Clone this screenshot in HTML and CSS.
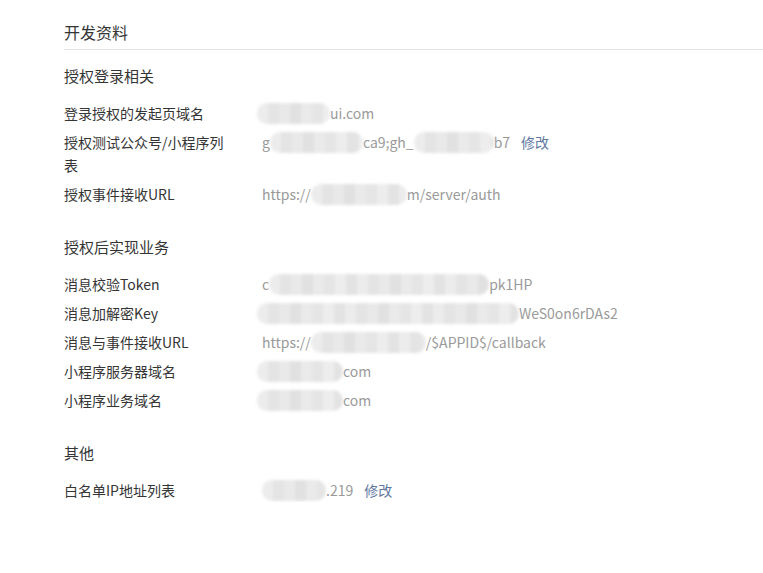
FILE: index.html
```html
<!DOCTYPE html>
<html lang="zh-CN">

<head>
  <meta charset="UTF-8" />
  <meta name="viewport" content="width=device-width, initial-scale=1.0" />
  <title>开发资料</title>
  <link rel="stylesheet" href="styles.css">
</head>

<body>
  <div class="page">
    <h2 class="page-title">开发资料</h2>

    <!-- 授权登录相关 -->
    <div class="section">
      <h3 class="section-title">授权登录相关</h3>
      <ul class="info-list">
        <li class="info-row">
          <span class="info-label">登录授权的发起页域名</span>
          <span class="info-value"><span class="mask mask-73 mask-flush"></span>ui.com</span>
        </li>
        <li class="info-row">
          <span class="info-label">授权测试公众号/小程序列表</span>
          <span class="info-value">g<span class="mask mask-93"></span>ca9;gh_<span class="mask mask-80"></span>b7<a class="edit-link" href="#">修改</a></span>
        </li>
        <li class="info-row">
          <span class="info-label">授权事件接收URL</span>
          <span class="info-value">https://<span class="mask mask-96"></span>m/server/auth</span>
        </li>
      </ul>
    </div>

    <!-- 授权后实现业务 -->
    <div class="section">
      <h3 class="section-title">授权后实现业务</h3>
      <ul class="info-list">
        <li class="info-row">
          <span class="info-label">消息校验Token</span>
          <span class="info-value">c<span class="mask mask-220"></span>pk1HP</span>
        </li>
        <li class="info-row">
          <span class="info-label">消息加解密Key</span>
          <span class="info-value"><span class="mask mask-262 mask-flush"></span>WeS0on6rDAs2</span>
        </li>
        <li class="info-row">
          <span class="info-label">消息与事件接收URL</span>
          <span class="info-value">https://<span class="mask mask-115"></span>/$APPID$/callback</span>
        </li>
        <li class="info-row">
          <span class="info-label">小程序服务器域名</span>
          <span class="info-value"><span class="mask mask-86 mask-flush"></span>com</span>
        </li>
        <li class="info-row">
          <span class="info-label">小程序业务域名</span>
          <span class="info-value"><span class="mask mask-86 mask-flush"></span>com</span>
        </li>
      </ul>
    </div>

    <!-- 其他 -->
    <div class="section">
      <h3 class="section-title">其他</h3>
      <ul class="info-list">
        <li class="info-row">
          <span class="info-label">白名单IP地址列表</span>
          <span class="info-value"><span class="mask mask-64"></span>.219<a class="edit-link" href="#">修改</a></span>
        </li>
      </ul>
    </div>
  </div>
</body>

</html>
```

FILE: styles.css
```css
/* Basic page styling */
body {
  margin: 0;
  font-family: "Noto Sans CJK SC", "Noto Sans", sans-serif;
  font-size: 14px;
  color: #353535;
  background-color: #fff;
}

.page {
  margin-left: 64px;
  padding-top: 20px;
}

/* Page title with divider */
.page-title {
  margin: 0;
  padding-bottom: 5px;
  font-size: 16px;
  font-weight: normal;
  line-height: 24px;
  border-bottom: 1px solid #e4e4e4;
}

.section {
  margin-top: 14px;
}

.section + .section {
  margin-top: 29px;
}

.section-title {
  margin: 0 0 14px;
  font-size: 15px;
  font-weight: normal;
  line-height: 24px;
}

/* Info rows */
.info-list {
  list-style: none;
  margin: 0;
  padding: 0;
  display: flex;
  flex-direction: column;
  gap: 6px;
}

.info-row {
  display: flex;
  line-height: 23px;
}

.info-label {
  width: 165px;
  flex-shrink: 0;
}

.info-value {
  margin-left: 33px;
  color: #9a9a9a;
  white-space: nowrap;
}

.edit-link {
  margin-left: 11px;
  color: #62789f;
  text-decoration: none;
}

/* Blurred (mosaic) parts of values */
.mask {
  display: inline-block;
  height: 21px;
  vertical-align: top;
  margin-top: 1px;
  border-radius: 10px;
  background-color: #e9e9e9;
  background-image: repeating-linear-gradient(90deg,
      #ececec 0 11px, #e4e4e4 11px 22px, #e9e9e9 22px 33px,
      #e1e1e1 33px 44px, #eaeaea 44px 55px, #e5e5e5 55px 66px,
      #ededed 66px 77px, #e3e3e3 77px 88px);
  filter: blur(1.5px);
}

.mask-flush {
  margin-left: -5px;
}

.mask-64 { width: 64px; }
.mask-73 { width: 73px; }
.mask-80 { width: 80px; }
.mask-86 { width: 86px; }
.mask-93 { width: 93px; }
.mask-96 { width: 96px; }
.mask-115 { width: 115px; }
.mask-220 { width: 220px; }
.mask-262 { width: 262px; }
```
